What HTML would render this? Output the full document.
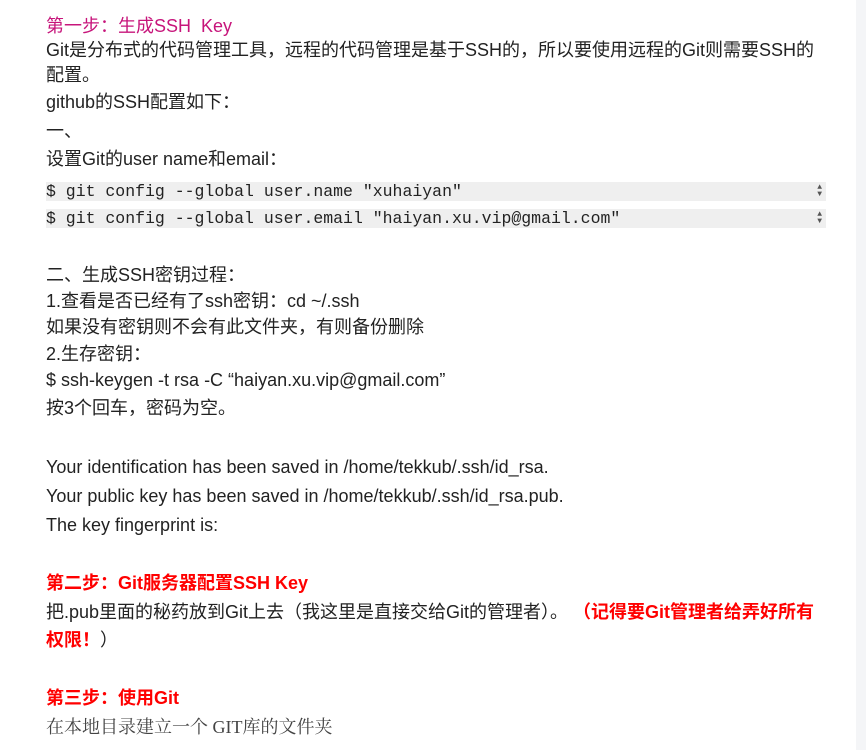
<!DOCTYPE html>
<html><head><meta charset="utf-8"><style>
body{margin:0;width:866px;height:750px;background:#fff;position:relative;overflow:hidden;font-family:"Liberation Sans","Noto Sans CJK SC",sans-serif;font-size:18px;color:#222;}
.r{position:absolute;left:46px;white-space:nowrap;line-height:20px;}
.strip{position:absolute;right:0;top:0;width:10px;height:750px;background:#f4f5f7;}
.code{position:absolute;left:46px;width:780px;height:19px;background:#efefef;font-family:"Liberation Mono",monospace;font-size:16.5px;line-height:19px;color:#222;}
.code span{position:absolute;right:4px;top:2px;font-size:8px;line-height:7px;color:#555;}
.red{color:#f00;font-weight:bold;}
</style></head><body>
<div class="strip"></div>
<div class="r" style="top:16px;color:#c7157b">第一步：生成SSH&nbsp; Key</div>
<div class="r" style="top:40px">Git是分布式的代码管理工具，远程的代码管理是基于SSH的，所以要使用远程的Git则需要SSH的</div>
<div class="r" style="top:65px">配置。</div>
<div class="r" style="top:92px">github的SSH配置如下：</div>
<div class="r" style="top:121px">一、</div>
<div class="r" style="top:149px">设置Git的user name和email：</div>
<div class="code" style="top:182px">$ git config --global user.name "xuhaiyan"<span>▲<br>▼</span></div>
<div class="code" style="top:209px">$ git config --global user.email "haiyan.xu.vip@gmail.com"<span>▲<br>▼</span></div>
<div class="r" style="top:265px">二、生成SSH密钥过程：</div>
<div class="r" style="top:291px">1.查看是否已经有了ssh密钥：cd ~/.ssh</div>
<div class="r" style="top:317px">如果没有密钥则不会有此文件夹，有则备份删除</div>
<div class="r" style="top:344px">2.生存密钥：</div>
<div class="r" style="top:370px">$ ssh-keygen -t rsa -C “haiyan.xu.vip@gmail.com”</div>
<div class="r" style="top:398px">按3个回车，密码为空。</div>
<div class="r" style="top:457px">Your identification has been saved in /home/tekkub/.ssh/id_rsa.</div>
<div class="r" style="top:486px">Your public key has been saved in /home/tekkub/.ssh/id_rsa.pub.</div>
<div class="r" style="top:515px">The key fingerprint is:</div>
<div class="r red" style="top:573px">第二步：Git服务器配置SSH Key</div>
<div class="r" style="top:602px">把.pub里面的秘药放到Git上去（我这里是直接交给Git的管理者）。 <span class="red">（记得要Git管理者给弄好所有</span></div>
<div class="r" style="top:630px"><span class="red">权限！</span>）</div>
<div class="r red" style="top:688px">第三步：使用Git</div>
<div class="r" style="top:717px;font-family:'Liberation Serif','Noto Serif CJK SC',serif;color:#444">在本地目录建立一个 GIT库的文件夹</div>
</body></html>
